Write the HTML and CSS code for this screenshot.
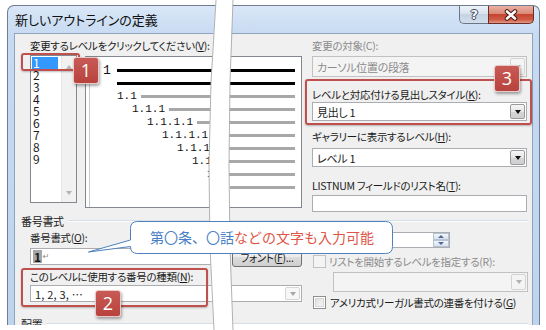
FILE: index.html
```html
<!DOCTYPE html>
<html lang="ja">
<head>
<meta charset="utf-8"/>
<title>新しいアウトラインの定義</title>
<link rel="stylesheet" href="styles.css">
</head>
<body>
<div class="stage">

<div class="window">
	<div class="titlebar">
		<span class="title">新しいアウトラインの定義</span>
		<div class="caps">
			<span class="cap help">?</span>
			<span class="cap close">
				<svg width="16" height="12" viewBox="0 0 16 12"><path d="M4 2.5 L12 9.5 M12 2.5 L4 9.5" stroke="#4e1a14" stroke-width="4.6" stroke-linecap="round"/><path d="M4 2.5 L12 9.5 M12 2.5 L4 9.5" stroke="#fff" stroke-width="2.6" stroke-linecap="round"/></svg>
			</span>
		</div>
	</div>

	<div class="client">
		<div class="top">
			<div class="col-l">
				<div class="lbl">変更するレベルをクリックしてください(<u>V</u>):</div>
				<div class="lv-row">
					<div class="levels">
						<ul>
							<li class="sel">1</li>
							<li>2</li>
							<li>3</li>
							<li>4</li>
							<li>5</li>
							<li>6</li>
							<li>7</li>
							<li>8</li>
							<li>9</li>
						</ul>
						<div class="vscroll"><i class="up"></i><i class="dn"></i></div>
					</div>
					<div class="preview">
						<div class="pl r0"><span class="num">1</span><span class="bar thick"></span></div>
						<div class="pl r1"><span class="bar thick"></span></div>
						<div class="pl r2"><span class="num">1.1</span><span class="bar"></span></div>
						<div class="pl r3"><span class="num">1.1.1</span><span class="bar"></span></div>
						<div class="pl r4"><span class="num">1.1.1.1</span><span class="bar"></span></div>
						<div class="pl r5"><span class="num">1.1.1.1.1</span><span class="bar"></span></div>
						<div class="pl r6"><span class="num">1.1.1.1.1.1</span><span class="bar"></span></div>
						<div class="pl r7"><span class="num">1.1.1.1.1.1.1</span><span class="bar"></span></div>
						<div class="pl r8"><span class="num">1.1.1.1.1.1.1.1</span><span class="bar"></span></div>
						<div class="pl r9"><span class="num">1.1.1.1.1.1.1.1.1</span><span class="bar"></span></div>
					</div>
				</div>
			</div>

			<div class="col-r">
				<div class="lbl dis">変更の対象(C):</div>
				<div class="combo dis target"><span>カーソル位置の段落</span><i class="arr"></i></div>
				<div class="lbl after-target">レベルと対応付ける見出しスタイル(<u>K</u>):</div>
				<div class="combo"><span>見出し 1</span><i class="arr"></i></div>
				<div class="lbl after-combo">ギャラリーに表示するレベル(<u>H</u>):</div>
				<div class="combo gallery"><span>レベル 1</span><i class="arr"></i></div>
				<div class="lbl after-gallery">LISTNUM フィールドのリスト名(<u>T</u>):</div>
				<div class="field"></div>
			</div>
		</div>

		<div class="ghead"><span>番号書式</span></div>
		<div class="gbody">
			<div class="col-l">
				<div class="lbl fmt-lbl">番号書式(<u>O</u>):</div>
				<div class="fmt-row">
					<div class="field fmt"><span class="fld">1</span><span class="ret">↵</span></div>
					<span class="btn">フォント(<u>F</u>)...</span>
				</div>
				<div class="lbl kind-lbl">このレベルに使用する番号の種類(<u>N</u>):</div>
				<div class="combo kind"><span class="seq">1, 2, 3, …</span><i class="arr"></i></div>
			</div>
			<div class="col-r">
				<div class="spin-row">
					<div class="spin"><i class="spb"><b class="su"></b><b class="sd"></b></i></div>
				</div>
				<div class="chk-row dis"><span class="chk"></span>リストを開始するレベルを指定する(R):</div>
				<div class="combo dis restart"><span></span><i class="arr"></i></div>
				<div class="chk-row legal"><span class="chk"></span>アメリカ式リーガル書式の連番を付ける(<u>G</u>)</div>
			</div>
		</div>

		<div class="ghead place"><span>配置</span></div>
	</div>
</div>

<svg class="tear" width="546" height="330" viewBox="0 0 546 330">
	<path d="M216 0 Q203 165 214 330 L233 330 Q225 165 233 0 Z" fill="#fff"/>
	<path d="M216 0 Q203 165 214 330" fill="none" stroke="#a9a9a9" stroke-width="0.9"/>
	<path d="M233 0 Q225 165 233 330" fill="none" stroke="#a9a9a9" stroke-width="0.9"/>
</svg>

<div class="mark m1"></div>
<div class="mark m2"></div>
<div class="mark m3"></div>

<div class="bubble">
	<svg width="308" height="36" viewBox="0 0 308 36"><path d="M51.5 1.5 H299.5 Q306.5 1.5 306.5 8.5 V26.5 Q306.5 33.5 299.5 33.5 H51.5 Q44.5 33.5 44.5 26.5 L2.5 32 L44.5 20 V8.5 Q44.5 1.5 51.5 1.5 Z" fill="#fff" stroke="#4f81bd" stroke-width="1"/></svg>
	<p><span class="blue">第〇条、〇話</span><span class="red">などの文字も入力可能</span></p>
</div>

<div class="badge b1">1</div>
<div class="badge b2">2</div>
<div class="badge b3">3</div>

</div>
</body>
</html>
```

FILE: styles.css
```css
* {
	box-sizing: border-box;
}
body {
	margin: 0;
	background: #fff;
	font-family: "Noto Sans CJK JP", sans-serif;
	font-size: 10.5px;
	letter-spacing: -0.3px;
	font-feature-settings: "palt";
	color: #1b1b1b;
}
u {
	text-decoration-thickness: 1px;
	text-underline-offset: 1px;
}
.stage {
	position: relative;
	width: 546px;
	height: 330px;
	overflow: hidden;
}

/* window frame */
.window {
	margin: 5px 0 0 7px;
	width: 533px;
	height: 320px;
	padding: 0 6px;
	border: 1px solid #6f7d8e;
	border-bottom: 0;
	border-radius: 7px 7px 0 0;
	background: linear-gradient(#d9e7f7, #c6daf2 30px, #bed4ee);
	overflow: hidden;
}
.titlebar {
	height: 27px;
	display: flex;
	justify-content: space-between;
	align-items: flex-start;
}
.title {
	font-size: 13px;
	letter-spacing: 0;
	line-height: 27px;
	padding-left: 1px;
	color: #111;
}
.caps {
	display: flex;
	margin-right: -1px;
}
.cap {
	height: 18px;
	display: flex;
	align-items: center;
	justify-content: center;
	border: 1px solid #6a788a;
	border-top: 0;
}
.help {
	width: 29px;
	border-right: 0;
	border-radius: 0 0 0 5px;
	background: linear-gradient(#eef3f9, #d9e2ed 45%, #c6d3e3 50%, #d3deeb);
	font: bold 13px "DejaVu Sans", sans-serif;
	color: #f4f6f9;
	text-shadow: 1px 0 0 #3d4b5e, -1px 0 0 #3d4b5e, 0 1px 0 #3d4b5e, 0 -1px 0 #3d4b5e;
}
.close {
	width: 46px;
	border-color: #6b2e27;
	border-radius: 0 0 5px 0;
	background: linear-gradient(#eab0a3, #d98a78 45%, #c54530 50%, #cf5b45 80%, #e39a84);
}

.client {
	height: 293px;
	background: #f0f0f0;
	border: 1px solid #8ea3bc;
	border-bottom: 0;
	padding-top: 5px;
	overflow: hidden;
}

.lbl {
	height: 14px;
	line-height: 14px;
	white-space: nowrap;
}
.dis {
	color: #8b8b8b;
}

.top {
	display: flex;
	gap: 10px;
	padding-left: 15px;
}
.top .col-l {
	width: 272px;
}
.top .col-r {
	width: 215px;
}

/* level list */
.lv-row {
	display: flex;
	gap: 8px;
	margin-top: 2px;
	align-items: flex-start;
}
.levels {
	display: flex;
	width: 47px;
	height: 148px;
	border: 1px solid #828790;
	background: #fff;
}
.levels ul {
	flex: 1;
	margin: 0;
	padding: 1px 0 0 1px;
	list-style: none;
}
.levels li {
	width: 26px;
	height: 12px;
	line-height: 12px;
	padding-left: 1px;
	font-size: 12px;
	letter-spacing: 0;
	font-feature-settings: normal;
}
.levels li.sel {
	background: #3399ff;
	color: #fff;
}
.vscroll {
	width: 15px;
	background: #f1f1f1;
	border-left: 1px solid #e6e6e6;
	display: flex;
	flex-direction: column;
	justify-content: space-between;
	align-items: center;
	padding: 9px 0 7px;
}
.vscroll i {
	width: 0;
	height: 0;
	border-left: 3.5px solid transparent;
	border-right: 3.5px solid transparent;
}
.vscroll .up {
	border-bottom: 4px solid #b4b4b4;
}
.vscroll .dn {
	border-top: 4px solid #b4b4b4;
}

/* preview */
.preview {
	width: 217px;
	height: 152px;
	margin-top: 1px;
	padding: 7px 6px 0 0;
	background: #fff;
	border: 1px solid #828790;
	box-shadow: inset 3px 0 0 #fff, inset 4px 0 0 #c9c9c9;
}
.pl {
	display: flex;
	align-items: center;
	height: 13px;
}
.num {
	flex: none;
	margin-right: 4px;
	font-family: "Liberation Mono", monospace;
	font-size: 11px;
	letter-spacing: 0;
	line-height: 13px;
	white-space: nowrap;
	overflow: hidden;
	color: #111;
}
.bar {
	flex: 1;
	height: 3px;
	background: #a8a8a8;
}
.bar.thick {
	background: #000;
}
.r0 { padding-left: 17px; }
.r0 .num { font-size: 13px; margin-right: 6px; }
.r1, .r2 { padding-left: 31px; }
.r3 { padding-left: 46px; }
.r4 { padding-left: 61px; }
.r5 { padding-left: 76px; }
.r6 { padding-left: 91px; }
.r7 { padding-left: 106px; }
.r8 { padding-left: 121px; }
.r9 { padding-left: 136px; }
.r6 .num { width: 40px; }
.r7 .num { width: 24px; }
.r8 .num { width: 8px; }
.r9 .num { width: 4px; }

/* fields */
.combo {
	display: flex;
	align-items: center;
	height: 19px;
	padding-left: 4px;
	border: 1px solid #abadb3;
	background: #fff;
	white-space: nowrap;
	font-size: 11px;
}
.combo span {
	flex: 1;
}
.combo .seq {
	letter-spacing: 0.2px;
	font-feature-settings: normal;
}
.combo .arr {
	align-self: stretch;
	width: 15px;
	margin: 1px;
	border: 1px solid #9a9a9a;
	border-radius: 2px;
	background: linear-gradient(#f6f6f6, #e6e6e6 50%, #d6d6d6 51%, #cfcfcf);
	display: flex;
	align-items: center;
	justify-content: center;
}
.combo .arr::before {
	content: "";
	border-left: 3.5px solid transparent;
	border-right: 3.5px solid transparent;
	border-top: 4px solid #111;
}
.combo.dis {
	background: #f4f4f4;
	border-color: #c1c1c1;
}
.combo.dis .arr {
	border-color: #d3d3d3;
	background: #f4f4f4;
}
.combo.dis .arr::before {
	border-top-color: #b0b0b0;
}
.combo.target {
	height: 21px;
	margin-top: 3px;
}
.after-target {
	margin-top: 11px;
}
.after-combo {
	margin-top: 9px;
}
.combo.gallery {
	margin-top: 4px;
}
.after-gallery {
	margin-top: 12px;
}
.field {
	height: 17px;
	margin-top: 2px;
	border: 1px solid #abadb3;
	background: #fff;
}

/* group boxes */
.ghead {
	display: flex;
	align-items: center;
	height: 14px;
	line-height: 14px;
	margin: 2px 4px 0 6px;
	font-size: 11px;
}
.ghead::after {
	content: "";
	flex: 1;
	margin-left: 4px;
	border-top: 1px solid #d5dfe5;
	border-bottom: 1px solid #fff;
}
.ghead.place {
	margin-top: 7px;
}
.gbody {
	display: flex;
	gap: 11px;
	padding-left: 15px;
}
.gbody .col-l {
	width: 272px;
}
.gbody .col-r {
	width: 215px;
}
.fmt-lbl {
	margin-top: 3px;
}
.fmt-row {
	display: flex;
	gap: 4px;
	margin-top: 3px;
	align-items: flex-start;
}
.field.fmt {
	width: 198px;
	margin-top: 0;
	display: flex;
	align-items: center;
	padding-left: 2px;
}
.fld {
	background: #a6a6a6;
	font-size: 12px;
	font-weight: bold;
	line-height: 13px;
	padding: 0 1px;
}
.ret {
	font-family: "DejaVu Sans", sans-serif;
	font-size: 8px;
	color: #8a8a8a;
	margin-left: 1px;
}
.btn {
	width: 70px;
	height: 20px;
	margin-top: -1px;
	border: 1px solid #707070;
	border-radius: 3px;
	background: linear-gradient(#f2f2f2, #ebebeb 50%, #dddddd 51%, #cfcfcf);
	display: flex;
	align-items: center;
	justify-content: center;
	white-space: nowrap;
}
.kind-lbl {
	margin-top: 3px;
}
.combo.kind {
	height: 17px;
	margin-top: 1px;
}
.combo.kind .arr {
	border-color: #d6d6d6;
	background: #f7f7f7;
}
.combo.kind .arr::before {
	border-top-color: #a6a6a6;
}

.spin-row {
	display: flex;
	margin-top: 4px;
	padding-left: 67px;
}
.spin {
	width: 70px;
	height: 16px;
	border: 1px solid #abadb3;
	background: #fff;
	display: flex;
	justify-content: flex-end;
}
.spb {
	width: 16px;
	display: flex;
	flex-direction: column;
}
.spb b {
	flex: 1;
	border: 1px solid #b7c2d2;
	background: linear-gradient(#f4f7fb, #d9e1ec);
	display: flex;
	align-items: center;
	justify-content: center;
}
.spb .su::before, .spb .sd::before {
	content: "";
	border-left: 3px solid transparent;
	border-right: 3px solid transparent;
}
.spb .su::before {
	border-bottom: 3px solid #4b6a98;
}
.spb .sd::before {
	border-top: 3px solid #4b6a98;
}
.chk-row {
	display: flex;
	align-items: center;
	height: 15px;
	margin-top: 6px;
	white-space: nowrap;
}
.chk {
	width: 13px;
	height: 13px;
	margin-right: 3px;
	border: 1px solid #8e8f8f;
	background: #fff;
	box-shadow: inset 0 0 0 1px #fff, inset 0 0 0 2px #d5d5d5;
}
.chk-row.dis .chk {
	border-color: #c2c2c2;
	background: #f4f4f4;
	box-shadow: none;
}
.combo.restart {
	height: 20px;
	margin: 3px 0 0 20px;
}
.chk-row.legal {
	margin-top: 3px;
}
.chk-row.legal .chk {
	margin-right: 4px;
	background: linear-gradient(135deg, #dcdcdc, #fbfbfb);
}

/* annotations */
.tear {
	position: absolute;
	left: 0;
	top: 0;
}
.mark {
	position: absolute;
	border: 2px solid #c0504d;
	border-radius: 3px;
	box-shadow: 0 1px 2px rgba(0, 0, 0, 0.25);
}
.m1 {
	left: 21px;
	top: 53px;
	width: 59px;
	height: 18px;
}
.m2 {
	left: 21px;
	top: 268px;
	width: 187px;
	height: 39px;
}
.m3 {
	left: 305px;
	top: 79px;
	width: 227px;
	height: 46px;
}
.badge {
	position: absolute;
	width: 26px;
	height: 27px;
	border: 1px solid #e9c9c7;
	border-radius: 3px;
	background: linear-gradient(#c85a55, #b8423d);
	box-shadow: 1px 2px 3px rgba(0, 0, 0, 0.35);
	color: #fff;
	font: 18px/25px "Open Sans", sans-serif;
	letter-spacing: 0;
	text-align: center;
}
.b1 {
	left: 73px;
	top: 57px;
}
.b2 {
	left: 95px;
	top: 290px;
}
.b3 {
	left: 494px;
	top: 65px;
}
.bubble {
	position: absolute;
	left: 86px;
	top: 220px;
	width: 308px;
	height: 36px;
}
.bubble svg {
	position: absolute;
	left: 0;
	top: 0;
}
.bubble p {
	position: relative;
	margin: 0;
	padding-left: 64px;
	font-size: 14px;
	letter-spacing: 0;
	line-height: 34px;
	font-feature-settings: normal;
	white-space: nowrap;
}
.blue {
	color: #4a80c6;
}
.red {
	color: #e05548;
}
```
